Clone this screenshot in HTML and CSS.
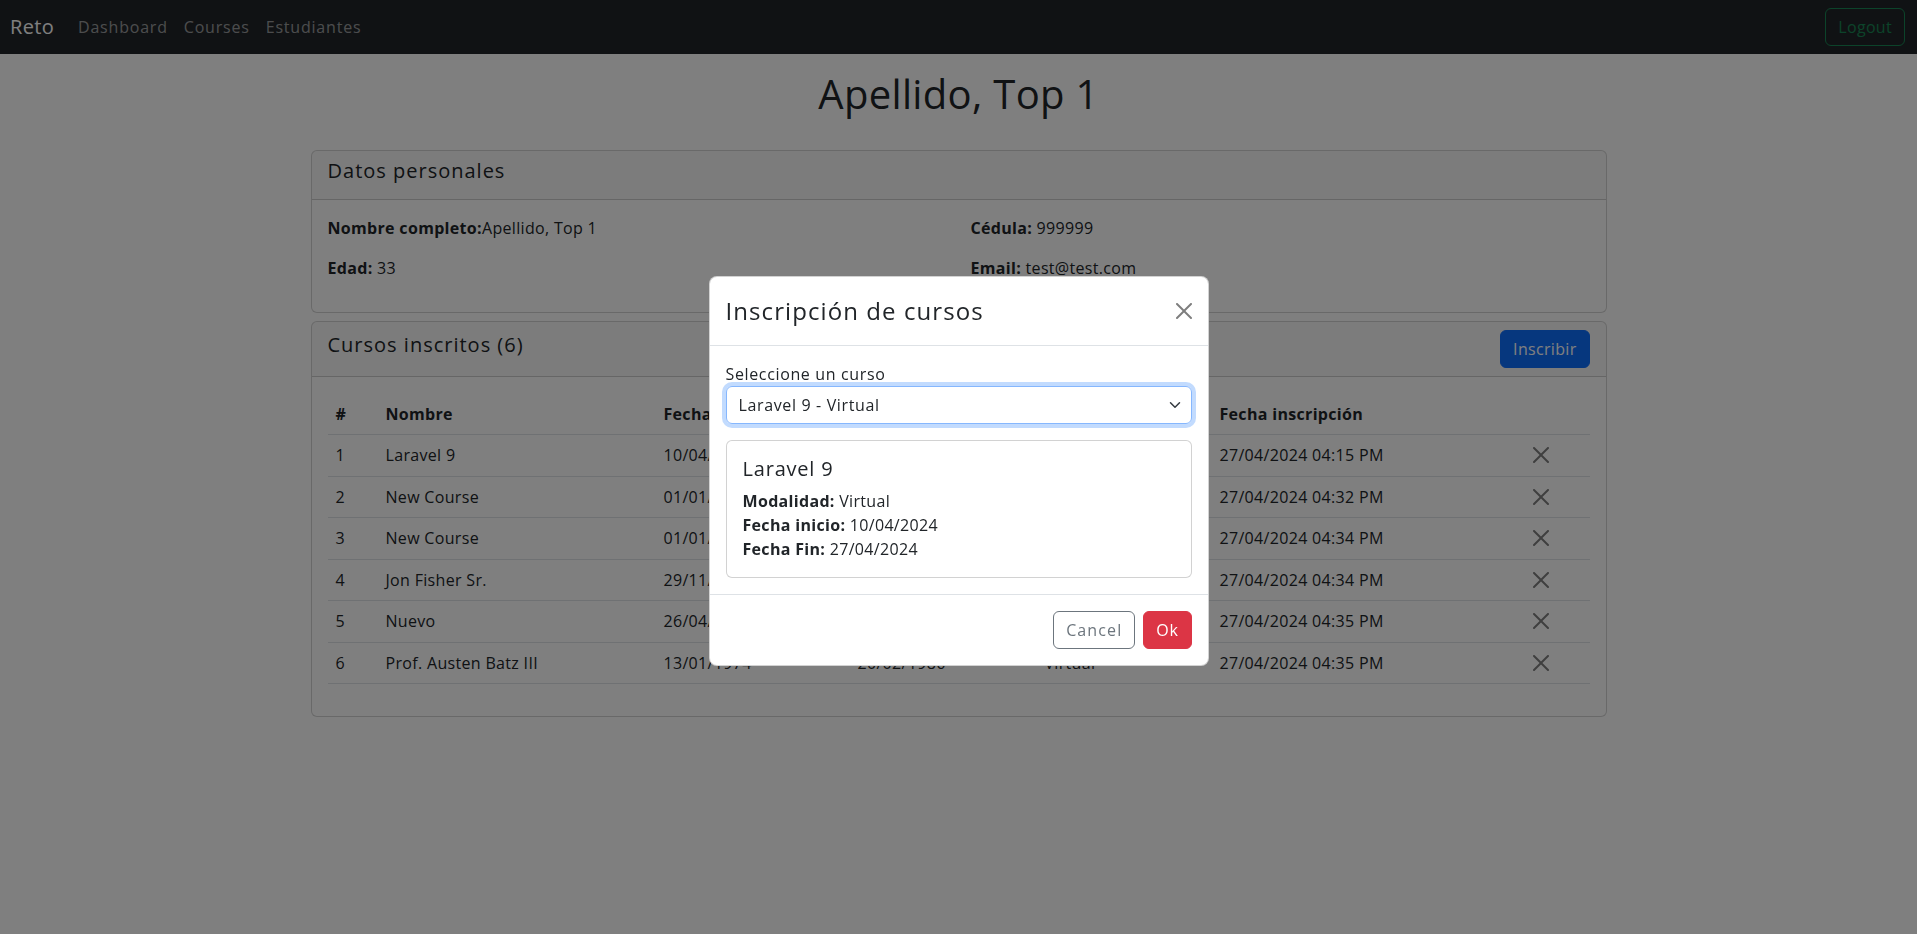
FILE: index.html
```html
<!DOCTYPE html>
<html lang="es">
<head>
<meta charset="utf-8">
<title>Reto</title>
<link rel="stylesheet" href="styles.css">
</head>
<body>
<nav class="navbar">
  <div class="nav-left">
    <a class="brand" href="#">Reto</a>
    <a class="nav-link" href="#">Dashboard</a>
    <a class="nav-link" href="#">Courses</a>
    <a class="nav-link" href="#">Estudiantes</a>
  </div>
  <button class="btn btn-outline-success">Logout</button>
</nav>

<main class="container">
  <h1 class="page-title">Apellido, Top 1</h1>

  <section class="card">
    <div class="card-header"><h5 class="h5">Datos personales</h5></div>
    <div class="card-body info-grid">
      <p><b>Nombre completo:</b>Apellido, Top 1</p>
      <p><b>Cédula:</b> 999999</p>
      <p><b>Edad:</b> 33</p>
      <p><b>Email:</b> test@test.com</p>
    </div>
  </section>

  <section class="card card-courses">
    <div class="card-header header-flex">
      <h5 class="h5">Cursos inscritos (6)</h5>
      <button class="btn btn-primary">Inscribir</button>
    </div>
    <div class="card-body">
      <table class="table">
        <thead>
          <tr>
            <th class="c-num">#</th>
            <th class="c-name">Nombre</th>
            <th class="c-start">Fecha inicio</th>
            <th class="c-end">Fecha fin</th>
            <th class="c-mode">Modalidad</th>
            <th class="c-date">Fecha inscripción</th>
            <th class="c-act"></th>
          </tr>
        </thead>
        <tbody>
          <tr><td>1</td><td>Laravel 9</td><td>10/04/2024</td><td>27/04/2024</td><td>Virtual</td><td>27/04/2024 04:15 PM</td><td><span class="btn-close row-close"><svg viewBox="0 0 16 16"><path d="M.293.293a1 1 0 0 1 1.414 0L8 6.586 14.293.293a1 1 0 1 1 1.414 1.414L9.414 8l6.293 6.293a1 1 0 0 1-1.414 1.414L8 9.414l-6.293 6.293a1 1 0 0 1-1.414-1.414L6.586 8 .293 1.707a1 1 0 0 1 0-1.414z"/></svg></span></td></tr>
          <tr><td>2</td><td>New Course</td><td>01/01/2024</td><td>31/12/2024</td><td>Presencial</td><td>27/04/2024 04:32 PM</td><td><span class="btn-close row-close"><svg viewBox="0 0 16 16"><path d="M.293.293a1 1 0 0 1 1.414 0L8 6.586 14.293.293a1 1 0 1 1 1.414 1.414L9.414 8l6.293 6.293a1 1 0 0 1-1.414 1.414L8 9.414l-6.293 6.293a1 1 0 0 1-1.414-1.414L6.586 8 .293 1.707a1 1 0 0 1 0-1.414z"/></svg></span></td></tr>
          <tr><td>3</td><td>New Course</td><td>01/01/2024</td><td>31/12/2024</td><td>Presencial</td><td>27/04/2024 04:34 PM</td><td><span class="btn-close row-close"><svg viewBox="0 0 16 16"><path d="M.293.293a1 1 0 0 1 1.414 0L8 6.586 14.293.293a1 1 0 1 1 1.414 1.414L9.414 8l6.293 6.293a1 1 0 0 1-1.414 1.414L8 9.414l-6.293 6.293a1 1 0 0 1-1.414-1.414L6.586 8 .293 1.707a1 1 0 0 1 0-1.414z"/></svg></span></td></tr>
          <tr><td>4</td><td>Jon Fisher Sr.</td><td>29/11/1995</td><td>14/07/2001</td><td>Virtual</td><td>27/04/2024 04:34 PM</td><td><span class="btn-close row-close"><svg viewBox="0 0 16 16"><path d="M.293.293a1 1 0 0 1 1.414 0L8 6.586 14.293.293a1 1 0 1 1 1.414 1.414L9.414 8l6.293 6.293a1 1 0 0 1-1.414 1.414L8 9.414l-6.293 6.293a1 1 0 0 1-1.414-1.414L6.586 8 .293 1.707a1 1 0 0 1 0-1.414z"/></svg></span></td></tr>
          <tr><td>5</td><td>Nuevo</td><td>26/04/2024</td><td>30/04/2024</td><td>Virtual</td><td>27/04/2024 04:35 PM</td><td><span class="btn-close row-close"><svg viewBox="0 0 16 16"><path d="M.293.293a1 1 0 0 1 1.414 0L8 6.586 14.293.293a1 1 0 1 1 1.414 1.414L9.414 8l6.293 6.293a1 1 0 0 1-1.414 1.414L8 9.414l-6.293 6.293a1 1 0 0 1-1.414-1.414L6.586 8 .293 1.707a1 1 0 0 1 0-1.414z"/></svg></span></td></tr>
          <tr><td>6</td><td>Prof. Austen Batz III</td><td>13/01/1974</td><td>20/02/1986</td><td>Virtual</td><td>27/04/2024 04:35 PM</td><td><span class="btn-close row-close"><svg viewBox="0 0 16 16"><path d="M.293.293a1 1 0 0 1 1.414 0L8 6.586 14.293.293a1 1 0 1 1 1.414 1.414L9.414 8l6.293 6.293a1 1 0 0 1-1.414 1.414L8 9.414l-6.293 6.293a1 1 0 0 1-1.414-1.414L6.586 8 .293 1.707a1 1 0 0 1 0-1.414z"/></svg></span></td></tr>
        </tbody>
      </table>
    </div>
  </section>
</main>

<div class="backdrop">
  <div class="modal">
    <div class="modal-header">
      <h5 class="modal-title">Inscripción de cursos</h5>
      <span class="btn-close modal-close"><svg viewBox="0 0 16 16"><path d="M.293.293a1 1 0 0 1 1.414 0L8 6.586 14.293.293a1 1 0 1 1 1.414 1.414L9.414 8l6.293 6.293a1 1 0 0 1-1.414 1.414L8 9.414l-6.293 6.293a1 1 0 0 1-1.414-1.414L6.586 8 .293 1.707a1 1 0 0 1 0-1.414z"/></svg></span>
    </div>
    <div class="modal-body">
      <label class="form-label">Seleccione un curso</label>
      <div class="form-select">
        <span>Laravel 9 - Virtual</span>
        <svg class="chevron" viewBox="0 0 16 16"><path fill="none" stroke="#343a40" stroke-linecap="round" stroke-linejoin="round" stroke-width="2" d="m2 5 6 6 6-6"/></svg>
      </div>
      <div class="card course-card">
        <div class="card-body">
          <h5 class="h5 course-title">Laravel 9</h5>
          <div><b>Modalidad:</b> Virtual</div>
          <div><b>Fecha inicio:</b> 10/04/2024</div>
          <div><b>Fecha Fin:</b> 27/04/2024</div>
        </div>
      </div>
    </div>
    <div class="modal-footer">
      <button class="btn btn-outline-secondary">Cancel</button>
      <button class="btn btn-danger">Ok</button>
    </div>
  </div>
</div>
</body>
</html>
```

FILE: styles.css
```css
* { box-sizing: border-box; }

html, body {
  margin: 0;
  padding: 0;
}

body {
  font-family: "Open Sans", "Liberation Sans", sans-serif;
  font-size: 16px;
  line-height: 1.5;
  color: #212529;
  background: #fff;
  letter-spacing: 0.02em;
}

b { font-weight: 700; }

a { text-decoration: none; }

.navbar {
  height: 54px;
  background: #212529;
  display: flex;
  align-items: center;
  justify-content: space-between;
  padding: 0 12px 0 10px;
}

.nav-left {
  display: flex;
  align-items: center;
}

.brand {
  color: #fff;
  font-size: 20px;
  line-height: 30px;
  margin-right: 16px;
}

.nav-link {
  color: rgba(255, 255, 255, .55);
  padding: 8px;
  letter-spacing: 0.05em;
}

.btn {
  font-family: inherit;
  font-size: 16px;
  line-height: 24px;
  letter-spacing: 0.02em;
  padding: 6px 12px;
  border: 1px solid transparent;
  border-radius: 6px;
  background: transparent;
  cursor: pointer;
}

.btn-outline-success { color: #198754; border-color: #198754; }
.btn-outline-secondary { color: #6c757d; border-color: #6c757d; letter-spacing: 0.07em; }
.btn-primary { color: #fff; background: #0d6efd; border-color: #0d6efd; }
.btn-danger { color: #fff; background: #dc3545; border-color: #dc3545; letter-spacing: 0.04em; }

.container {
  max-width: 1320px;
  margin: 0 auto;
  padding: 0 12px;
}

.page-title {
  text-align: center;
  font-size: 40px;
  font-weight: 500;
  line-height: 1.2;
  margin: 16px 0 32px;
}

.h5 {
  font-size: 20px;
  font-weight: 500;
  line-height: 1.2;
  margin: 0 0 8px;
  letter-spacing: 0.05em;
}

.card {
  background: #fff;
  border: 1px solid rgba(0, 0, 0, .175);
  border-radius: 6px;
}

.card-courses { margin-top: 8px; }

.card-header {
  padding: 8px 16px;
  background: rgba(33, 37, 41, .03);
  border-bottom: 1px solid rgba(0, 0, 0, .175);
  border-radius: 5px 5px 0 0;
}

.header-flex {
  display: flex;
  align-items: center;
  justify-content: space-between;
}

.card-body { padding: 16px; }

.info-grid {
  display: grid;
  grid-template-columns: 1fr 1fr;
  column-gap: 24px;
}

.info-grid p { margin: 0 0 16px; }

.table {
  width: 100%;
  border-collapse: collapse;
  table-layout: fixed;
  margin-bottom: 16px;
}

.table th, .table td {
  padding: 8px;
  border-bottom: 1px solid #dee2e6;
  text-align: left;
  vertical-align: middle;
  white-space: nowrap;
  height: 41.5px;
}

.table th { font-weight: 700; }

.c-num { width: 50px; }
.c-name { width: 278px; }
.c-start { width: 194px; }
.c-end { width: 187px; }
.c-mode { width: 175px; }
.c-date { width: 309px; }

.btn-close {
  display: inline-block;
  width: 16px;
  height: 16px;
  padding: 4px;
  box-sizing: content-box;
  opacity: .5;
  vertical-align: middle;
}

.row-close { display: block; }

.btn-close svg {
  display: block;
  width: 16px;
  height: 16px;
  fill: #000;
}

.backdrop {
  position: fixed;
  inset: 0;
  background: rgba(0, 0, 0, .5);
  display: flex;
  justify-content: center;
  align-items: center;
  padding-top: 8px;
}

.modal {
  width: 500px;
  background: #fff;
  border: 1px solid rgba(0, 0, 0, .175);
  border-radius: 8px;
}

.modal-header {
  display: flex;
  align-items: center;
  justify-content: space-between;
  padding: 16px;
  border-bottom: 1px solid #dee2e6;
}

.modal-title {
  margin: 0;
  font-size: 24px;
  font-weight: 500;
  line-height: 1.5;
  letter-spacing: 0.045em;
}

.modal-close {
  padding: 8px;
  margin: -8px -8px -8px auto;
}

.modal-body { padding: 16px; }

.form-label {
  display: block;
  margin: 0;
  letter-spacing: 0.04em;
}

.form-select {
  height: 38px;
  display: flex;
  align-items: center;
  justify-content: space-between;
  padding: 6px 12px;
  border: 1px solid #86b7fe;
  border-radius: 6px;
  box-shadow: 0 0 0 4px rgba(13, 110, 253, .25);
  letter-spacing: 0.04em;
}

.chevron {
  width: 16px;
  height: 12px;
  margin-right: -4px;
}

.course-card { margin-top: 16px; }

.course-title { letter-spacing: 0.04em; }

.modal-footer {
  display: flex;
  justify-content: flex-end;
  align-items: center;
  padding: 12px;
  border-top: 1px solid #dee2e6;
}

.modal-footer .btn { margin: 4px; }
```
